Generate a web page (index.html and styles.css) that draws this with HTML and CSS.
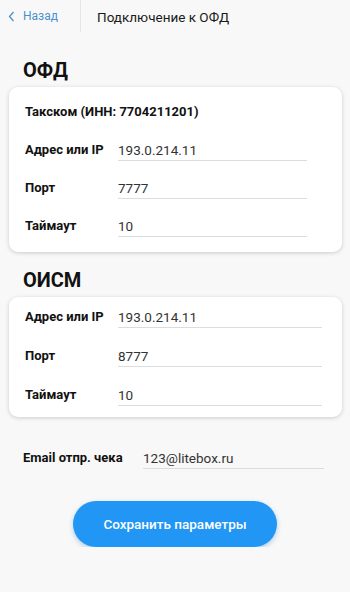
FILE: index.html
```html
<!DOCTYPE html>
<html lang="ru">
<head>
    <meta charset="UTF-8">
    <meta name="viewport" content="width=device-width, initial-scale=1.0">
    <title>Подключение к ОФД</title>
    <link rel="stylesheet" href="styles.css">
</head>
<body>
    <div class="header">
        <div class="back">
            <svg width="7" height="11" viewBox="0 0 7 11"><path d="M5.5 1 L1.5 5.5 L5.5 10" fill="none" stroke="#4a90d0" stroke-width="1.3"/></svg>
            <span>Назад</span>
        </div>
        <div class="title">Подключение к ОФД</div>
    </div>

    <h2 class="section">ОФД</h2>
    <div class="card card-ofd">
        <div class="card-title">Такском (ИНН: 7704211201)</div>
        <div class="row">
            <div class="label">Адрес или IP</div>
            <div class="field">193.0.214.11</div>
        </div>
        <div class="row">
            <div class="label">Порт</div>
            <div class="field">7777</div>
        </div>
        <div class="row">
            <div class="label">Таймаут</div>
            <div class="field">10</div>
        </div>
    </div>

    <h2 class="section">ОИСМ</h2>
    <div class="card card-oism">
        <div class="row">
            <div class="label">Адрес или IP</div>
            <div class="field">193.0.214.11</div>
        </div>
        <div class="row">
            <div class="label">Порт</div>
            <div class="field">8777</div>
        </div>
        <div class="row">
            <div class="label">Таймаут</div>
            <div class="field">10</div>
        </div>
    </div>

    <div class="row email">
        <div class="label">Email отпр. чека</div>
        <div class="field">123@litebox.ru</div>
    </div>

    <div class="actions">
        <button class="save">Сохранить параметры</button>
    </div>
</body>
</html>
```

FILE: styles.css
```css
body {
    margin: 0;
    font-family: Roboto, "Noto Sans", sans-serif;
    background: #f8f8f8;
    color: #222;
}
.header {
    display: flex;
    height: 34px;
    align-items: stretch;
}
.back {
    width: 72px;
    display: flex;
    align-items: center;
    gap: 8px;
    padding-left: 8px;
    border-right: 1px solid #e6e6e6;
    margin-bottom: 2px;
    color: #4a90d0;
    font-size: 12px;
}
.title {
    display: flex;
    align-items: center;
    padding-left: 16px;
    font-size: 13.5px;
    color: #1a1a1a;
}
.section {
    margin: 24px 0 5px 23px;
    font-size: 20px;
    line-height: 24px;
    font-weight: 700;
    color: #111;
}
.card {
    margin: 0 8px 0 9px;
    background: #fff;
    border-radius: 9px;
    box-shadow: 0 1px 4px rgba(0, 0, 0, 0.18);
    display: flex;
    flex-direction: column;
}
.card-ofd {
    padding: 16px 16px 15px;
    gap: 18px;
}
.card-oism {
    padding: 11px 16px 11px;
    gap: 19px;
}
.card-ofd + .section {
    margin-top: 16px;
}
.card-title {
    font-size: 13px;
    font-weight: 700;
    line-height: 18px;
    margin-bottom: 2px;
    color: #111;
}
.row {
    display: flex;
    align-items: flex-start;
}
.label {
    width: 93px;
    font-size: 13px;
    font-weight: 700;
    line-height: 18px;
    color: #111;
}
.field {
    width: 189px;
    font-size: 13.5px;
    line-height: 18px;
    padding-bottom: 1px;
    border-bottom: 1px solid #dcdcdc;
    color: #333;
}
.card-oism .field {
    width: 204px;
}
.email {
    margin: 32px 0 0 23px;
}
.email .label {
    width: 120px;
}
.email .field {
    width: 181px;
}
.actions {
    display: flex;
    padding-left: 73px;
    margin-top: 32px;
}
.save {
    width: 204px;
    height: 46px;
    border: none;
    border-radius: 23px;
    background: #2196f5;
    color: #fff;
    font-family: Roboto, "Noto Sans", sans-serif;
    font-size: 13.5px;
    font-weight: 500;
    box-shadow: 0 2px 5px rgba(33, 120, 200, 0.35);
}
```
